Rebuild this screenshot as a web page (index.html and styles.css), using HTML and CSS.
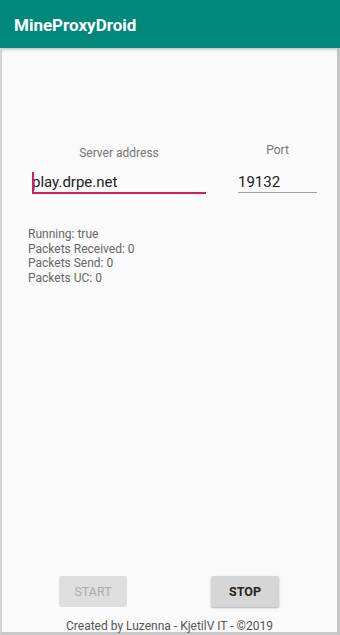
FILE: index.html
```html
<!DOCTYPE html>
<html lang="en">
<head>
  <meta charset="UTF-8">
  <title>MineProxyDroid</title>
  <link rel="stylesheet" href="styles.css">
</head>
<body>

<div class="app-bar">MineProxyDroid</div>

<div class="content">
  <div class="fields">
    <div class="field field-address">
      <div class="label">Server address</div>
      <div class="input active"><span class="cursor"></span>play.drpe.net</div>
    </div>
    <div class="field field-port">
      <div class="label">Port</div>
      <div class="input">19132</div>
    </div>
  </div>

  <div class="status">
    <div>Running: true</div>
    <div>Packets Received: 0</div>
    <div>Packets Send: 0</div>
    <div>Packets UC: 0</div>
  </div>

  <div class="spacer"></div>

  <div class="buttons">
    <button class="btn" disabled>START</button>
    <button class="btn">STOP</button>
  </div>
  <div class="footer">Created by Luzenna - KjetilV IT - ©2019</div>
</div>

</body>
</html>
```

FILE: styles.css
```css
body {
  margin: 0;
  font-family: Roboto, "Liberation Sans", sans-serif;
  background: #fafafa;
  width: 340px;
  height: 635px;
  display: flex;
  flex-direction: column;
  overflow: hidden;
}

.app-bar {
  height: 48px;
  background: #00897b;
  color: #fff;
  font-size: 17px;
  font-weight: bold;
  padding-left: 14px;
  line-height: 50px;
  box-sizing: border-box;
  box-shadow: 0 1px 3px rgba(0,0,0,0.3);
}

.content {
  flex: 1;
  display: flex;
  flex-direction: column;
  border-left: 2px solid #d4d4d4;
  border-right: 3px solid #c4c4c4;
  border-bottom: 3px solid #c8c8c8;
}

.fields {
  display: flex;
  margin-top: 98px;
  padding-left: 30px;
}

.field-address {
  width: 174px;
}

.field-port {
  width: 79px;
  margin-left: 32px;
}

.label {
  font-size: 12px;
  line-height: 14px;
  color: #757575;
  text-align: center;
  height: 27px;
}

.field-port .label {
  margin-top: -3px;
  height: 30px;
}

.input {
  font-size: 15px;
  line-height: 18px;
  color: #212121;
  height: 19px;
  border-bottom: 1px solid #9e9e9e;
  position: relative;
}

.input.active {
  border-bottom: 2px solid #d81b60;
}

.cursor {
  position: absolute;
  left: 0;
  top: -1px;
  width: 2px;
  height: 20px;
  background: #d81b60;
}

.status {
  margin-top: 33px;
  padding-left: 26px;
  font-size: 12px;
  line-height: 14.5px;
  color: #666;
}

.spacer {
  flex: 1;
}

.buttons {
  display: flex;
  justify-content: space-between;
  padding: 0 58px 0 57px;
}

.btn {
  width: 68px;
  height: 31px;
  border: none;
  border-radius: 2px;
  background: #d6d6d6;
  font-family: inherit;
  font-size: 12.5px;
  font-weight: bold;
  color: #222;
  box-shadow: 0 1px 2px rgba(0,0,0,0.3);
}

.btn:disabled {
  background: #dedede;
  color: #aaa;
  font-weight: normal;
  box-shadow: none;
}

.footer {
  text-align: center;
  font-size: 12px;
  line-height: 12px;
  color: #555;
  margin-top: 13px;
  height: 12px;
}
```
